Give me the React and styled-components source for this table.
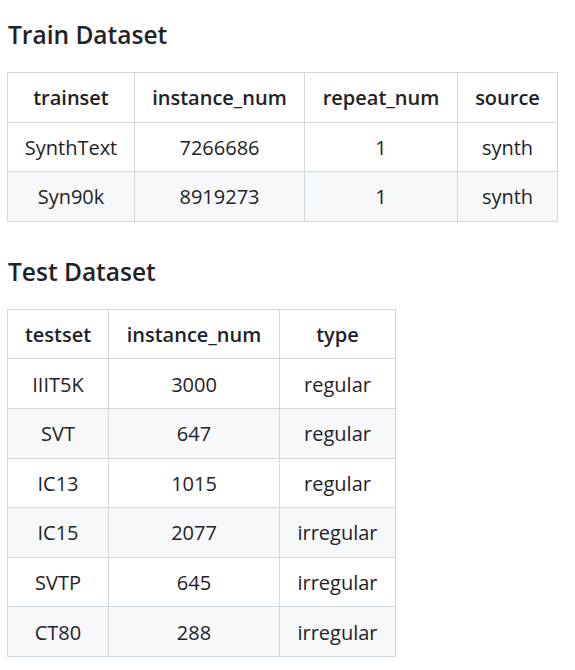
import React from "react";
import styled, { createGlobalStyle } from "styled-components";

const Global = createGlobalStyle`
  html, body { margin: 0; padding: 0; background: #ffffff; }
  body {
    font-family: "Open Sans", "Noto Sans", "Liberation Sans", sans-serif;
    color: #1f2328;
  }
`;

const Page = styled.div`
  padding: 0 0 0 7px;
  display: flex;
  flex-direction: column;
  align-items: flex-start;
`;

const Heading = styled.h3`
  margin: ${(p) => (p.$first ? "18px" : "33px")} 0 21px 1px;
  font-size: 24.5px;
  font-weight: 600;
  line-height: 33px;
  color: #1f2328;
`;

const Table = styled.table`
  border-collapse: collapse;
  border-spacing: 0;
  table-layout: fixed;
  font-size: 20px;
`;

const Row = styled.tr`
  background: ${(p) => (p.$alt ? "#f6f8fa" : "#ffffff")};
`;

const Th = styled.th`
  width: ${(p) => p.$w}px;
  box-sizing: border-box;
  border: 1px solid #d1d9e0;
  padding: 9.3px 10px 7.3px;
  line-height: 32px;
  font-weight: 600;
  text-align: center;
  white-space: nowrap;
`;

const Td = styled.td`
  border: 1px solid #d1d9e0;
  padding: 9.3px 10px 7.3px;
  line-height: 32px;
  font-weight: 400;
  text-align: center;
  white-space: nowrap;
`;

const train = {
  cols: [
    ["trainset", 127],
    ["instance_num", 170],
    ["repeat_num", 153],
    ["source", 100],
  ],
  rows: [
    ["SynthText", "7266686", "1", "synth"],
    ["Syn90k", "8919273", "1", "synth"],
  ],
};

const test = {
  cols: [
    ["testset", 101],
    ["instance_num", 171],
    ["type", 116],
  ],
  rows: [
    ["IIIT5K", "3000", "regular"],
    ["SVT", "647", "regular"],
    ["IC13", "1015", "regular"],
    ["IC15", "2077", "irregular"],
    ["SVTP", "645", "irregular"],
    ["CT80", "288", "irregular"],
  ],
};

function DataTable({ data }) {
  return (
    <Table>
      <thead>
        <Row>
          {data.cols.map(([name, w]) => (
            <Th key={name} $w={w}>
              {name}
            </Th>
          ))}
        </Row>
      </thead>
      <tbody>
        {data.rows.map((r, i) => (
          <Row key={i} $alt={i % 2 === 1}>
            {r.map((c, j) => (
              <Td key={j}>{c}</Td>
            ))}
          </Row>
        ))}
      </tbody>
    </Table>
  );
}

export default function App() {
  return (
    <Page>
      <Global />
      <Heading $first>Train Dataset</Heading>
      <DataTable data={train} />
      <Heading>Test Dataset</Heading>
      <DataTable data={test} />
    </Page>
  );
}
